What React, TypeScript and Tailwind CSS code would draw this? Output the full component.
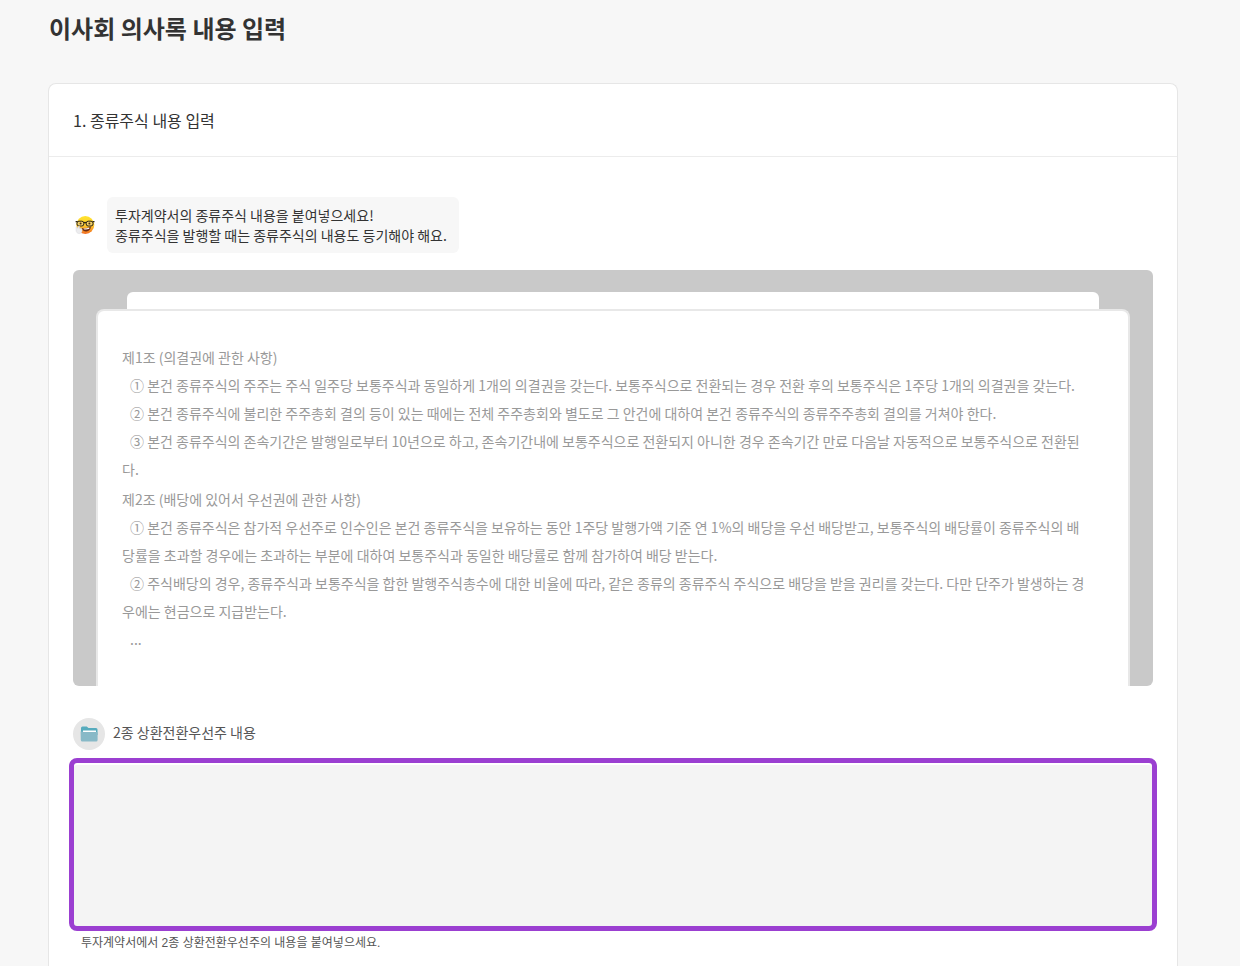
import { useState } from 'react'

// ─── Data ─────────────────────────────────────────────────────

const articles = [
  {
    title: '제1조 (의결권에 관한 사항)',
    clauses: [
      '① 본건 종류주식의 주주는 주식 일주당 보통주식과 동일하게 1개의 의결권을 갖는다. 보통주식으로 전환되는 경우 전환 후의 보통주식은 1주당 1개의 의결권을 갖는다.',
      '② 본건 종류주식에 불리한 주주총회 결의 등이 있는 때에는 전체 주주총회와 별도로 그 안건에 대하여 본건 종류주식의 종류주주총회 결의를 거쳐야 한다.',
      '③ 본건 종류주식의 존속기간은 발행일로부터 10년으로 하고, 존속기간내에 보통주식으로 전환되지 아니한 경우 존속기간 만료 다음날 자동적으로 보통주식으로 전환된다.',
    ],
  },
  {
    title: '제2조 (배당에 있어서 우선권에 관한 사항)',
    clauses: [
      '① 본건 종류주식은 참가적 우선주로 인수인은 본건 종류주식을 보유하는 동안 1주당 발행가액 기준 연 1%의 배당을 우선 배당받고, 보통주식의 배당률이 종류주식의 배당률을 초과할 경우에는 초과하는 부분에 대하여 보통주식과 동일한 배당률로 함께 참가하여 배당 받는다.',
      '② 주식배당의 경우, 종류주식과 보통주식을 합한 발행주식총수에 대한 비율에 따라, 같은 종류의 종류주식 주식으로 배당을 받을 권리를 갖는다. 다만 단주가 발생하는 경우에는 현금으로 지급받는다.',
      '...',
    ],
  },
]

// ─── Icons ────────────────────────────────────────────────────

function NerdFace() {
  return (
    <svg viewBox="0 0 20 20" className="size-5 shrink-0" aria-hidden="true">
      <defs>
        <linearGradient id="face" x1="0" y1="0" x2="0" y2="1">
          <stop offset="0" stopColor="#ffe52e" />
          <stop offset="0.55" stopColor="#fdc52b" />
          <stop offset="1" stopColor="#f26a21" />
        </linearGradient>
      </defs>
      <circle cx="10.3" cy="10" r="9" fill="url(#face)" />
      <path d="M6.500 13c3 .8 6.200.4 9.300-1.400.1 2.800-1.800 4.800-4.500 4.800-2.500 0-4.300-1.200-4.800-3.400z" fill="#6b2a12" />
      <path d="M8.500 13.400c2 .2 4-.1 5.800-.9v1.300c-1.800.7-4 .9-5.500.5z" fill="#fff" />
      <rect x="2" y="6.200" width="6.800" height="4.800" rx="2" fill="#f0cf6a" stroke="#2e2616" strokeWidth="1" />
      <rect x="11.200" y="6.200" width="6.800" height="4.800" rx="2" fill="#f0cf6a" stroke="#2e2616" strokeWidth="1" />
      <path d="M.6 6.600h2M17.600 6.600h1.900M8.800 8c.6-.6 1.800-.6 2.400 0" stroke="#2e2616" strokeWidth="1.200" fill="none" />
      <circle cx="5.600" cy="8.600" r="1" fill="#4a2b12" />
      <circle cx="14.400" cy="8.600" r="1" fill="#4a2b12" />
      <path d="M1.100 12.500c0-.9 1.200-.9 1.300 0l.3.900.6-2c.3-.9 1.500-.7 1.400.2l-.2 1.700 1.900.1c1 .2 1 1 .6 1.500.4 2-.6 3.600-2.800 3.600-2 0-3.100-1.200-3.100-3.200z" fill="#ececee" stroke="#cfcfd4" strokeWidth="0.400" />
    </svg>
  )
}

function FolderIcon() {
  return (
    <svg viewBox="0 0 18 16" className="h-4 w-[18px]" aria-hidden="true">
      <path d="M1 2a1.500 1.500 0 0 1 1.500-1.500h4.200L8.500 2H16a1.500 1.500 0 0 1 1.500 1.500V9H1z" fill="#57abbd" />
      <path d="M3 4.500h13V7H3z" fill="#fff" />
      <path d="M.6 5.500h1.900c.5 0 .6.600 1 .6h13c.7 0 1.100.3 1.100 1v7a1.500 1.500 0 0 1-1.500 1.500H2.300a1.500 1.500 0 0 1-1.500-1.500z" fill="#88b9c7" />
    </svg>
  )
}

// ─── Sample document ──────────────────────────────────────────

function SampleDocument() {
  return (
    <div className="mt-[17px] overflow-hidden rounded-md bg-[#c9c9c9] px-[23px] pt-[22px]">
      <div className="mx-[31px] h-[17px] rounded-t-md bg-white" />
      <div className="flex flex-col gap-0.5 rounded-t-lg border-2 border-b-0 border-[#e8e8e8] bg-white pt-8 pr-10 pb-[33px] pl-6 text-sm leading-7 text-[#999]">
        {articles.map(article => (
          <section key={article.title}>
            <h3>{article.title}</h3>
            {article.clauses.map(clause => (
              <p key={clause} className="indent-2">{clause}</p>
            ))}
          </section>
        ))}
      </div>
    </div>
  )
}

// ─── Page ─────────────────────────────────────────────────────

export default function App() {
  const [content, setContent] = useState('')

  return (
    <main className="flex min-h-screen flex-col bg-[#f7f7f7] pt-2 pr-[62px] pl-12 font-['Noto_Sans_CJK_KR',sans-serif] text-[#333]">
      <h1 className="pl-px text-2xl leading-10 font-bold">이사회 의사록 내용 입력</h1>

      <div className="mt-[35px] grow rounded-t-lg border border-b-0 border-[#e6e6e6] bg-white">
        <h2 className="border-b border-[#ececec] px-6 py-6 text-base leading-6">1. 종류주식 내용 입력</h2>

        <div className="px-6 pt-10 pb-4">
          <div className="flex items-center gap-3">
            <div className="flex w-[22px] justify-end">
              <NerdFace />
            </div>
            <p className="rounded-md bg-[#f7f7f7] py-2 pr-3 pl-2 text-sm leading-5">
              투자계약서의 종류주식 내용을 붙여넣으세요!
              <br />
              종류주식을 발행할 때는 종류주식의 내용도 등기해야 해요.
            </p>
          </div>

          <SampleDocument />

          <div className="mt-8 flex items-center gap-2">
            <span className="flex size-8 items-center justify-center rounded-full bg-[#e6e6e6]">
              <FolderIcon />
            </span>
            <label htmlFor="stock-content" className="pb-1 text-sm leading-5 text-[#555]">
              2종 상환전환우선주 내용
            </label>
          </div>

          <div className="-mx-1 mt-2">
            <textarea
              id="stock-content"
              aria-describedby="stock-content-help"
              value={content}
              onChange={e => setContent(e.target.value)}
              className="block h-[173px] w-full resize-none rounded-lg border-[5px] border-[#9b3fd1] bg-[#f4f4f4] p-3 text-sm shadow-[inset_0_2px_0_#fff] outline-none"
            />
          </div>
          <p
            id="stock-content-help"
            className="mt-1 px-2 font-['Liberation_Sans','Noto_Sans_CJK_KR',sans-serif] text-xs leading-4 text-[#555]"
          >
            투자계약서에서 2종 상환전환우선주의 내용을 붙여넣으세요.
          </p>
        </div>
      </div>
    </main>
  )
}
